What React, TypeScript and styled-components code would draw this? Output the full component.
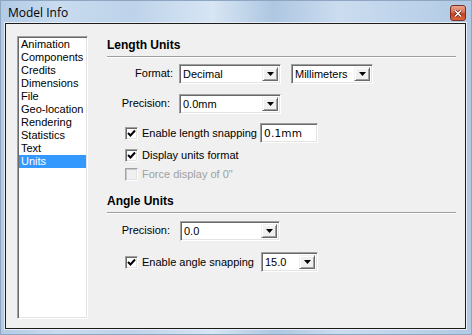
import { FC } from 'react'
import styled, { createGlobalStyle } from 'styled-components'

// ========================================================================
// Style
// ========================================================================

const GlobalStyle = createGlobalStyle`
  html, body {
    margin: 0;
    padding: 0;
    background: #ffffff;
  }
  body {
    font-family: "Liberation Sans", Arial, sans-serif;
    font-size: 11px;
    color: #000;
  }
`

const Window = styled.div`
  width: 472px;
  height: 335px;
  box-sizing: border-box;
  display: flex;
  flex-direction: column;
  border: 1px solid #8ea6c2;
  background: linear-gradient(
    90deg,
    #b3cbe5 0%,
    #c8dbef 12%,
    #bed3ea 28%,
    #d7e5f4 45%,
    #aec7e2 58%,
    #cbdcef 72%,
    #bcd2ea 88%,
    #b1c9e3 100%
  );
`

const TitleBar = styled.div`
  height: 22px;
  box-sizing: border-box;
  display: flex;
  align-items: flex-start;
  justify-content: space-between;
  padding: 3px 5px 0 7px;
`

const Title = styled.span`
  font-family: "Open Sans", "Liberation Sans", sans-serif;
  font-size: 12px;
  line-height: 17px;
  color: #000;
`

const CloseButton = styled.div`
  width: 16px;
  height: 16px;
  margin-top: 1px;
  box-sizing: border-box;
  border: 1px solid #7a2e22;
  border-radius: 3px;
  background: linear-gradient(180deg, #eba592 0%, #d9704f 45%, #c5401f 55%, #d8683e 100%);
  display: flex;
  align-items: center;
  justify-content: center;
`

const Client = styled.div`
  flex: 1;
  margin: 0 5px 5px 4px;
  border: 1px solid #1c1c1c;
  background: #f0f0f0;
  display: flex;
  padding: 12px 9px 9px 11px;
  box-shadow: 0 0 0 1px #e8eef5;
`

const ListBox = styled.div`
  width: 71px;
  box-sizing: border-box;
  background: #fff;
  border-top: 1px solid #a0a0a0;
  border-left: 1px solid #a0a0a0;
  border-right: 1px solid #fff;
  border-bottom: 1px solid #fff;
  box-shadow: inset 1px 1px 0 #696969, inset -1px -1px 0 #e3e3e3;
  padding: 1px 1px;
`

const ListItem = styled.div<{ $selected?: boolean }>`
  height: 13px;
  line-height: 13px;
  padding-left: 2px;
  white-space: nowrap;
  background: ${(p) => (p.$selected ? '#3399ff' : 'transparent')};
  color: ${(p) => (p.$selected ? '#fff' : '#000')};
`

const Panel = styled.div`
  flex: 1;
  margin-left: 19px;
  display: flex;
  flex-direction: column;
`

const Heading = styled.div<{ $top: number }>`
  margin-top: ${(p) => p.$top}px;
  height: 14px;
  line-height: 14px;
  font-size: 12px;
  font-weight: bold;
`

const Separator = styled.div`
  margin-top: 4px;
  height: 0;
  border-top: 1px solid #a0a0a0;
  border-bottom: 1px solid #fff;
`

const Row = styled.div<{ $top: number; $height?: number; $indent?: number }>`
  margin-top: ${(p) => p.$top}px;
  height: ${(p) => p.$height ?? 20}px;
  padding-left: ${(p) => p.$indent ?? 0}px;
  display: flex;
  align-items: center;
`

const Label = styled.span<{ $width: number; $gap: number }>`
  width: ${(p) => p.$width}px;
  margin-right: ${(p) => p.$gap}px;
  margin-bottom: 3px;
  text-align: right;
  white-space: nowrap;
`

const Combo = styled.div<{ $width: number; $gap?: number }>`
  width: ${(p) => p.$width}px;
  height: 20px;
  margin-left: ${(p) => p.$gap ?? 0}px;
  box-sizing: border-box;
  display: flex;
  background: #fff;
  border-top: 1px solid #a0a0a0;
  border-left: 1px solid #a0a0a0;
  border-right: 1px solid #fff;
  border-bottom: 1px solid #fff;
  box-shadow: inset 1px 1px 0 #696969, inset -1px -1px 0 #e3e3e3;
  padding: 2px;
`

const ComboText = styled.span`
  flex: 1;
  line-height: 14px;
  padding-left: 1px;
  white-space: nowrap;
  overflow: hidden;
`

const DropButton = styled.div`
  width: 16px;
  box-sizing: border-box;
  background: #f0f0f0;
  border-top: 1px solid #f0f0f0;
  border-left: 1px solid #f0f0f0;
  border-right: 1px solid #696969;
  border-bottom: 1px solid #696969;
  box-shadow: inset 1px 1px 0 #fff, inset -1px -1px 0 #a0a0a0;
  display: flex;
  align-items: center;
  justify-content: center;
`

const TextInput = styled.div<{ $width: number }>`
  width: ${(p) => p.$width}px;
  height: 20px;
  box-sizing: border-box;
  background: #fff;
  border-top: 1px solid #a0a0a0;
  border-left: 1px solid #a0a0a0;
  border-right: 1px solid #fff;
  border-bottom: 1px solid #fff;
  box-shadow: inset 1px 1px 0 #696969, inset -1px -1px 0 #e3e3e3;
  padding: 3px 0 0 3px;
  font-family: "DejaVu Sans", sans-serif;
  font-size: 10.5px;
  letter-spacing: 0.2px;
`

const CheckBox = styled.div<{ $disabled?: boolean }>`
  width: 13px;
  height: 13px;
  box-sizing: border-box;
  background: ${(p) => (p.$disabled ? '#f0f0f0' : '#fff')};
  border-top: 1px solid #a0a0a0;
  border-left: 1px solid #a0a0a0;
  border-right: 1px solid #fff;
  border-bottom: 1px solid #fff;
  box-shadow: ${(p) =>
    p.$disabled
      ? 'inset 1px 1px 0 #c8c8c8, inset -1px -1px 0 #e3e3e3'
      : 'inset 1px 1px 0 #696969, inset -1px -1px 0 #e3e3e3'};
  display: flex;
  align-items: center;
  justify-content: center;
  flex-shrink: 0;
`

const CheckText = styled.span<{ $width?: number; $disabled?: boolean }>`
  margin-left: 4px;
  width: ${(p) => (p.$width ? `${p.$width}px` : 'auto')};
  white-space: nowrap;
  color: ${(p) => (p.$disabled ? '#a0a0a0' : '#000')};
`

// ========================================================================
// Parts
// ========================================================================

const Arrow: FC = () => (
  <svg width="7" height="4" viewBox="0 0 7 4">
    <polygon points="0,0 7,0 3.5,4" fill="#000" />
  </svg>
)

const Tick: FC = () => (
  <svg width="9" height="9" viewBox="0 0 9 9">
    <path d="M1 4 L3.5 6.5 L8 1.5" fill="none" stroke="#000" strokeWidth="2" />
  </svg>
)

const Dropdown: FC<{ value: string; width: number; gap?: number }> = ({ value, width, gap }) => (
  <Combo $width={width} $gap={gap}>
    <ComboText>{value}</ComboText>
    <DropButton>
      <Arrow />
    </DropButton>
  </Combo>
)

const items = [
  'Animation',
  'Components',
  'Credits',
  'Dimensions',
  'File',
  'Geo-location',
  'Rendering',
  'Statistics',
  'Text',
  'Units',
]

// ========================================================================
// View
// ========================================================================

const App: FC = () => {
  return (
    <>
      <GlobalStyle />
      <Window>
        <TitleBar>
          <Title>Model Info</Title>
          <CloseButton>
            <svg width="8" height="7" viewBox="0 0 8 7">
              <path d="M1 0.5 L7 6.5 M7 0.5 L1 6.5" stroke="#4a1a10" strokeWidth="2.6" />
              <path d="M1 0.5 L7 6.5 M7 0.5 L1 6.5" stroke="#fff" strokeWidth="1.5" />
            </svg>
          </CloseButton>
        </TitleBar>

        <Client>
          <ListBox>
            {items.map((item) => (
              <ListItem key={item} $selected={item === 'Units'}>
                {item}
              </ListItem>
            ))}
          </ListBox>

          <Panel>
            <Heading $top={2}>Length Units</Heading>
            <Separator />

            <Row $top={6}>
              <Label $width={66} $gap={6}>
                Format:
              </Label>
              <Dropdown value="Decimal" width={102} />
              <Dropdown value="Millimeters" width={82} gap={10} />
            </Row>

            <Row $top={10}>
              <Label $width={63} $gap={9}>
                Precision:
              </Label>
              <Dropdown value="0.0mm" width={102} />
            </Row>

            <Row $top={9} $indent={18}>
              <CheckBox>
                <Tick />
              </CheckBox>
              <CheckText $width={118}>Enable length snapping</CheckText>
              <TextInput $width={58}>0.1mm</TextInput>
            </Row>

            <Row $top={4} $height={16} $indent={18}>
              <CheckBox>
                <Tick />
              </CheckBox>
              <CheckText>Display units format</CheckText>
            </Row>

            <Row $top={3} $height={16} $indent={18}>
              <CheckBox $disabled />
              <CheckText $disabled>Force display of 0"</CheckText>
            </Row>

            <Heading $top={12}>Angle Units</Heading>
            <Separator />

            <Row $top={7}>
              <Label $width={63} $gap={10}>
                Precision:
              </Label>
              <Dropdown value="0.0" width={100} />
            </Row>

            <Row $top={11} $indent={18}>
              <CheckBox>
                <Tick />
              </CheckBox>
              <CheckText $width={119}>Enable angle snapping</CheckText>
              <Dropdown value="15.0" width={57} />
            </Row>
          </Panel>
        </Client>
      </Window>
    </>
  )
}

export default App
